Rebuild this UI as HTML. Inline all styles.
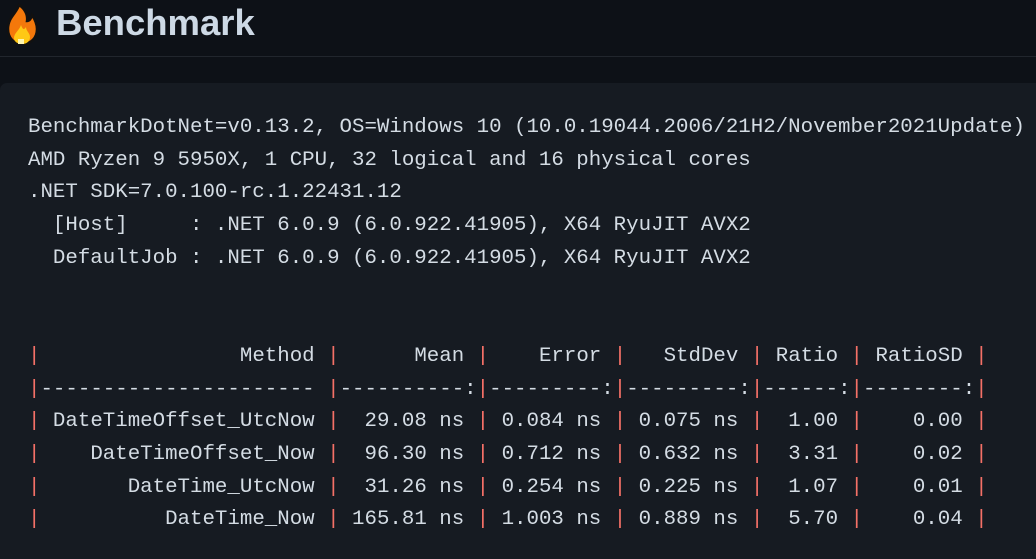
<!DOCTYPE html>
<html><head><meta charset="utf-8"><style>
html,body{margin:0;padding:0;background:#0d1117;width:1036px;height:559px;overflow:hidden;position:relative}
.h{position:absolute;left:56px;top:2px;height:44px;line-height:42px;font-family:"Liberation Sans",sans-serif;font-weight:bold;font-size:36.5px;color:#cdd9e5}
.line{position:absolute;left:0;top:56px;width:1036px;height:1px;background:#21262d}
.blk{position:absolute;left:0;top:83px;width:1036px;height:476px;background:#161b22;border-radius:7px 0 0 0}
pre{position:absolute;left:28px;top:112px;margin:0;font-family:"Liberation Mono",monospace;font-size:20.77px;line-height:32.7px;color:#d4dce4;white-space:pre}
.p{color:#f47067}
</style></head><body>
<svg style="position:absolute;left:5px;top:3px" width="34" height="42" viewBox="0 0 34 42">
<path d="M14 2 C12 10 3 14 3 26 C3 35 9 41 17 41 C26 41 32 35 32 26 C32 20 29 15 27 12 C26 16 24 18 22 18 C23 11 19 5 14 2Z" fill="#f4780b" stroke="#111" stroke-width="2.5"/>
<path d="M16 22 C14 28 9 30 9 35 C9 39 13 41 17 41 C22 41 25 38 25 34 C25 30 21 28 21 24 C19 27 18 27 16 22Z" fill="#ffc815"/>
<path d="M13 36 h6 v5 h-6z" fill="#fff6b0"/>
</svg>
<div class="h">Benchmark</div>
<div class="line"></div>
<div class="blk"></div>
<pre>BenchmarkDotNet=v0.13.2, OS=Windows 10 (10.0.19044.2006/21H2/November2021Update)
AMD Ryzen 9 5950X, 1 CPU, 32 logical and 16 physical cores
.NET SDK=7.0.100-rc.1.22431.12
  [Host]     : .NET 6.0.9 (6.0.922.41905), X64 RyuJIT AVX2
  DefaultJob : .NET 6.0.9 (6.0.922.41905), X64 RyuJIT AVX2


<span class="p">|</span>                Method <span class="p">|</span>      Mean <span class="p">|</span>    Error <span class="p">|</span>   StdDev <span class="p">|</span> Ratio <span class="p">|</span> RatioSD <span class="p">|</span>
<span class="p">|</span>---------------------- <span class="p">|</span>----------:<span class="p">|</span>---------:<span class="p">|</span>---------:<span class="p">|</span>------:<span class="p">|</span>--------:<span class="p">|</span>
<span class="p">|</span> DateTimeOffset_UtcNow <span class="p">|</span>  29.08 ns <span class="p">|</span> 0.084 ns <span class="p">|</span> 0.075 ns <span class="p">|</span>  1.00 <span class="p">|</span>    0.00 <span class="p">|</span>
<span class="p">|</span>    DateTimeOffset_Now <span class="p">|</span>  96.30 ns <span class="p">|</span> 0.712 ns <span class="p">|</span> 0.632 ns <span class="p">|</span>  3.31 <span class="p">|</span>    0.02 <span class="p">|</span>
<span class="p">|</span>       DateTime_UtcNow <span class="p">|</span>  31.26 ns <span class="p">|</span> 0.254 ns <span class="p">|</span> 0.225 ns <span class="p">|</span>  1.07 <span class="p">|</span>    0.01 <span class="p">|</span>
<span class="p">|</span>          DateTime_Now <span class="p">|</span> 165.81 ns <span class="p">|</span> 1.003 ns <span class="p">|</span> 0.889 ns <span class="p">|</span>  5.70 <span class="p">|</span>    0.04 <span class="p">|</span></pre>
</body></html>
